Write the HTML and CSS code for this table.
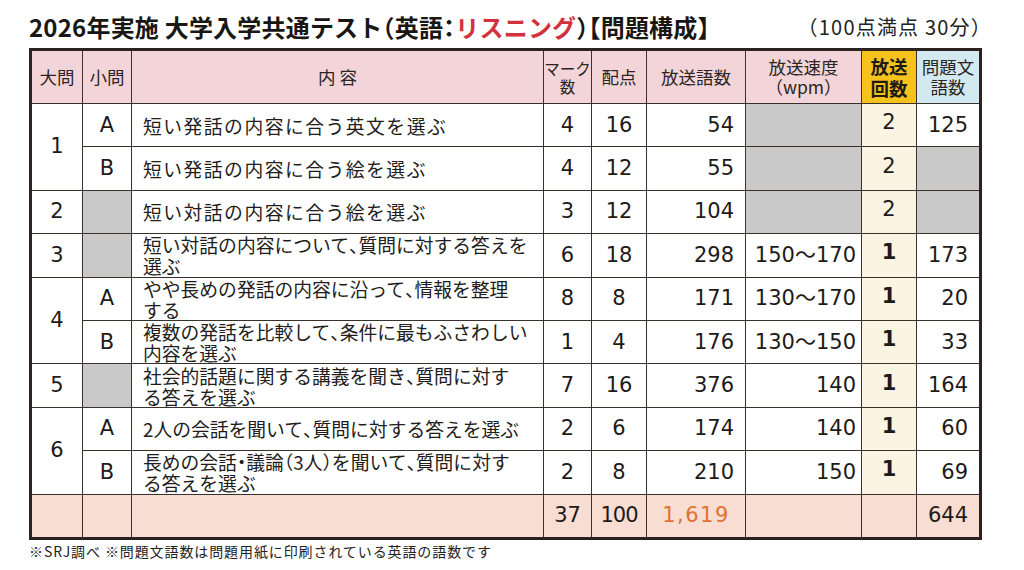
FILE: index.html
```html
<!DOCTYPE html>
<html lang="ja">
<head>
<meta charset="utf-8">
<link rel="stylesheet" href="styles.css">
</head>
<body>
<div class="page">
  <div class="titlebar">
    <h1 class="title">2026年実施 大学入学共通テスト<span class="h">（</span>英語<span class="h">：</span><span class="red">リスニング</span><span class="h">）</span>【問題構成】</h1>
    <div class="note">（100点満点 30分）</div>
  </div>
  <table class="grid">
    <colgroup>
      <col class="c-dai"><col class="c-sho"><col class="c-txt"><col class="c-mark"><col class="c-pt"><col class="c-words"><col class="c-speed"><col class="c-times"><col class="c-qw">
    </colgroup>
    <thead>
      <tr class="head">
        <th>大問</th><th>小問</th><th>内&nbsp;容</th><th class="small">マーク<br>数</th><th>配点</th><th>放送語数</th><th>放送速度<br>（wpm）</th><th class="gold">放送<br>回数</th><th class="blue">問題文<br>語数</th>
      </tr>
    </thead>
    <tbody>
      <tr>
        <td rowspan="2" class="num c">1</td><td class="num c">A</td><td class="txt one">短い発話の内容に合う英文を選ぶ</td><td class="num c">4</td><td class="num c">16</td><td class="num r">54</td><td class="gray"></td><td class="times">2</td><td class="num r">125</td>
      </tr>
      <tr>
        <td class="num c">B</td><td class="txt one">短い発話の内容に合う絵を選ぶ</td><td class="num c">4</td><td class="num c">12</td><td class="num r">55</td><td class="gray"></td><td class="times">2</td><td class="gray"></td>
      </tr>
      <tr>
        <td class="num c">2</td><td class="gray"></td><td class="txt one">短い対話の内容に合う絵を選ぶ</td><td class="num c">3</td><td class="num c">12</td><td class="num r">104</td><td class="gray"></td><td class="times">2</td><td class="gray"></td>
      </tr>
      <tr>
        <td class="num c">3</td><td class="gray"></td><td class="txt">短い対話の内容について<span class="h">、</span>質問に対する答えを<br>選ぶ</td><td class="num c">6</td><td class="num c">18</td><td class="num r">298</td><td class="num rs">150〜170</td><td class="times b">1</td><td class="num r">173</td>
      </tr>
      <tr>
        <td rowspan="2" class="num c">4</td><td class="num c">A</td><td class="txt">やや長めの発話の内容に沿って<span class="h">、</span>情報を整理<br>する</td><td class="num c">8</td><td class="num c">8</td><td class="num r">171</td><td class="num rs">130〜170</td><td class="times b">1</td><td class="num r">20</td>
      </tr>
      <tr>
        <td class="num c">B</td><td class="txt">複数の発話を比較して<span class="h">、</span>条件に最もふさわしい<br>内容を選ぶ</td><td class="num c">1</td><td class="num c">4</td><td class="num r">176</td><td class="num rs">130〜150</td><td class="times b">1</td><td class="num r">33</td>
      </tr>
      <tr>
        <td class="num c">5</td><td class="gray"></td><td class="txt">社会的話題に関する講義を聞き<span class="h">、</span>質問に対す<br>る答えを選ぶ</td><td class="num c">7</td><td class="num c">16</td><td class="num r">376</td><td class="num rs">140</td><td class="times b">1</td><td class="num r">164</td>
      </tr>
      <tr>
        <td rowspan="2" class="num c">6</td><td class="num c">A</td><td class="txt">2人の会話を聞いて<span class="h">、</span>質問に対する答えを選ぶ</td><td class="num c">2</td><td class="num c">6</td><td class="num r">174</td><td class="num rs">140</td><td class="times b">1</td><td class="num r">60</td>
      </tr>
      <tr>
        <td class="num c">B</td><td class="txt">長めの会話<span class="h">・</span>議論<span class="h">（</span>3人<span class="h">）</span>を聞いて<span class="h">、</span>質問に対す<br>る答えを選ぶ</td><td class="num c">2</td><td class="num c">8</td><td class="num r">210</td><td class="num rs">150</td><td class="times b">1</td><td class="num r">69</td>
      </tr>
      <tr class="sum">
        <td></td><td></td><td></td><td class="num c">37</td><td class="num c tight">100</td><td class="num c orange">1,619</td><td></td><td></td><td class="num r">644</td>
      </tr>
    </tbody>
  </table>
  <p class="foot">※SRJ調べ ※問題文語数は問題用紙に印刷されている英語の語数です</p>
</div>
</body>
</html>
```

FILE: styles.css
```css
html, body {
  margin: 0;
  padding: 0;
  background: #ffffff;
}
body {
  font-family: "Noto Sans CJK JP", "Noto Sans", sans-serif;
  color: #1e1a18;
}
.page {
  padding-left: 29px;
  width: 953px;
}
.titlebar {
  display: flex;
  justify-content: space-between;
  align-items: center;
  height: 48px;
}
.title {
  margin: 0;
  font-size: 24px;
  font-weight: 700;
  letter-spacing: 0.2px;
  color: #1a1614;
  line-height: 1;
  padding-top: 6px;
}
.h {
  font-feature-settings: "halt";
}
.red {
  color: #d2323e;
}
.note {
  font-size: 20px;
  letter-spacing: 1.2px;
  color: #222;
  padding-top: 4px;
  margin-right: -10px;
}
.grid {
  border-collapse: collapse;
  table-layout: fixed;
  width: 953px;
  border: 3px solid #2b2220;
}
.c-dai { width: 52px; }
.c-sho { width: 49px; }
.c-txt { width: 412px; }
.c-mark { width: 48px; }
.c-pt { width: 55px; }
.c-words { width: 99px; }
.c-speed { width: 116px; }
.c-times { width: 55px; }
.c-qw { width: 64px; }

.grid th, .grid td {
  border: 1.5px solid #3a302c;
  padding: 0;
  white-space: nowrap;
}
.head th {
  height: 52px;
  background: #f3d5d9;
  font-weight: 400;
  font-size: 17.5px;
  line-height: 20px;
  color: #2a2422;
  text-align: center;
}
.head th.small {
  font-size: 15.5px;
  line-height: 18px;
}
.head th.gold {
  background: #f5c31c;
  font-weight: 700;
  font-size: 18.5px;
  line-height: 22px;
  color: #1e1a18;
}
.head th.blue {
  background: #d3e9f0;
}
.grid tbody tr {
  height: 43.4px;
}
.grid tbody tr.sum {
  height: 44px;
}
.txt {
  font-size: 18.8px;
  line-height: 21px;
  padding-left: 11px !important;
  vertical-align: middle;
  color: #221c1a;
}
.txt.one {
  letter-spacing: 1.5px;
}
.num {
  font-family: "DejaVu Sans", "Noto Sans CJK JP", sans-serif;
  font-size: 21px;
  color: #1e1a18;
  line-height: 1;
}
.c { text-align: center; }
.r { text-align: right; padding-right: 11px !important; }
.rs { text-align: right; padding-right: 5px !important; }
.gray {
  background: #c9c9c9;
}
.times {
  font-family: "DejaVu Sans", sans-serif;
  background: #fcf4e2;
  text-align: center;
  font-size: 21px;
  line-height: 1;
  vertical-align: middle;
  padding-bottom: 5px !important;
}
.times.b {
  font-weight: 700;
}
.sum td {
  background: #f8ddd3;
}
.tight {
  letter-spacing: -1px;
}
.orange {
  color: #e07232;
  letter-spacing: 1.5px;
}
.foot {
  margin: 3px 0 0 0;
  font-size: 14px;
  letter-spacing: 0.9px;
  color: #222;
  line-height: 16px;
}
```
